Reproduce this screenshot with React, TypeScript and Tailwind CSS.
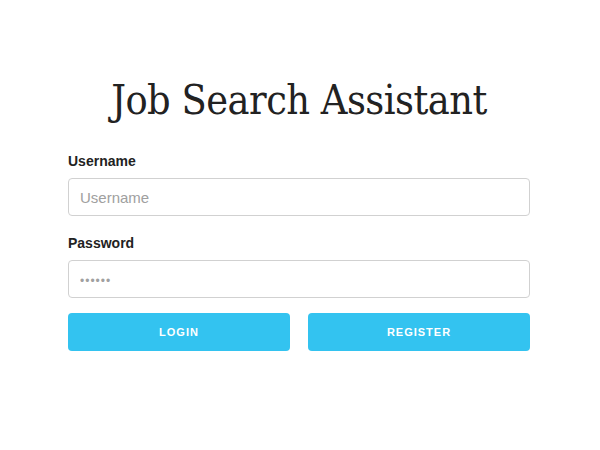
const App = () => {
  return (
    <div className="w-[600px] h-[450px] bg-white font-['Liberation_Sans',Arial,sans-serif] text-[#222]">
      <div className="pt-[75px] ml-[68px] w-[462px]">
        <h1 className="text-center text-[41px] leading-[50px] text-[#222] font-['DejaVu_Serif',serif] font-stretch-condensed tracking-[-0.5px]">
          Job Search Assistant
        </h1>
        <form className="mt-[26px]">
          <label className="block text-[14px] font-bold leading-[20px] mb-[7px]">Username</label>
          <input
            type="text"
            placeholder="Username"
            className="block w-full h-[38px] px-[11px] border border-[#d1d1d1] rounded-[4px] text-[15px] placeholder:text-[#a0a0a0] outline-none"
          />
          <label className="block text-[14px] font-bold leading-[20px] mt-[17px] mb-[7px]">Password</label>
          <input
            type="password"
            placeholder="••••••"
            className="block w-full h-[38px] px-[11px] border border-[#d1d1d1] rounded-[4px] text-[15px] placeholder:text-[#a0a0a0] placeholder:text-[12px] placeholder:tracking-[1px] outline-none"
          />
          <div className="grid grid-cols-2 gap-[18px] mt-[15px]">
            <button type="button" className="h-[38px] rounded-[4px] bg-[#33c3f0] text-white text-[11px] font-bold tracking-[1px] uppercase">
              Login
            </button>
            <button type="button" className="h-[38px] rounded-[4px] bg-[#33c3f0] text-white text-[11px] font-bold tracking-[1px] uppercase">
              Register
            </button>
          </div>
        </form>
      </div>
    </div>
  );
};

export default App;
